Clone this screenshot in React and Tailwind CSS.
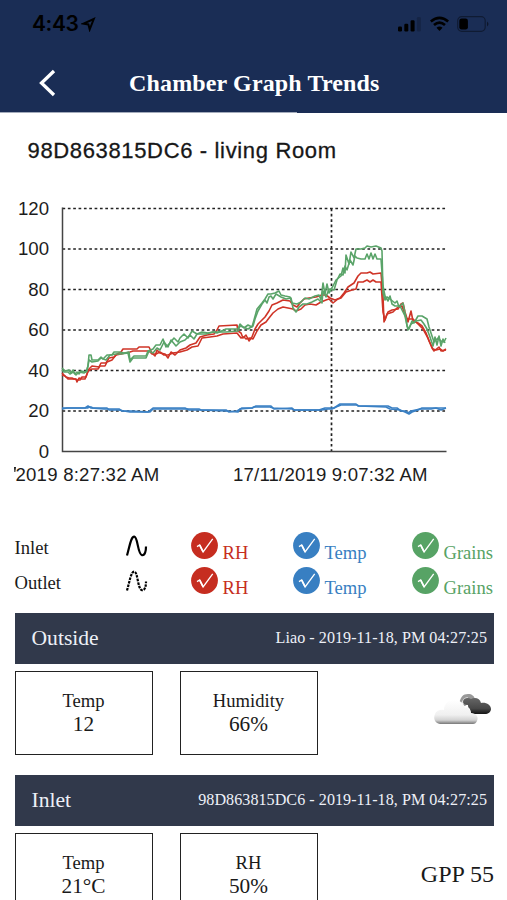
const SERIF = "font-['Liberation_Serif',serif]";

// pixel position of a value on the 0-120 scale
const yOf = (value) => 261.5 - value * 2.025;

const lines = [
  {
    color: '#3a80c4',
    points:
      '62,219 67,218 88,218 88,217 91,217 93,218 107,218 109,220 119,220 124,221 130,222 150,222 153,219 199,219 201,220 226,221 238,222 240,219 252,218 254,217 270,217 273,218 292,219 295,220 322,220 328,219 332,219 336,217 341,215 357,215 359,216 386,217 390,219 400,220 405,222 409,224 412,222 418,220 422,218 446,218',
  },
  {
    color: '#3a80c4',
    points:
      '62,218 85,218 88,216 91,218 104,219 119,219 122,221 132,221 148,222 153,218 185,218 189,220 226,220 229,222 237,221 242,218 252,218 256,216 271,216 274,219 292,218 294,220 319,220 325,218 334,218 340,214 356,214 358,216 388,216 392,218 397,218 401,221 406,221 408,223 411,221 420,219 431,219 436,218 441,220 446,218',
  },
  {
    color: '#cf3427',
    points:
      '62,183 66,187 69,188 72,188 74,189 76,189 77,192 79,188 82,189 85,189 87,184 89,179 92,176 99,177 101,173 106,173 109,168 114,167 117,164 121,162 123,159 137,159 139,157 149,157 152,163 155,166 157,160 160,163 165,164 168,168 171,162 175,165 180,160 186,158 190,155 196,153 200,147 207,145 214,144 217,140 219,136 237,135 238,141 241,143 243,148 246,145 249,151 252,147 255,139 258,134 262,130 265,127 269,121 272,115 277,113 283,110 290,111 293,115 297,117 300,113 304,109 309,108 316,107 322,105 326,105 330,108 335,110 340,108 344,103 348,97 354,93 358,86 361,83 367,83 370,82 373,84 381,83 383,106 384,132 388,122 392,120 398,119 401,114 403,113 405,122 408,132 411,121 413,131 418,133 422,136 426,143 429,151 433,159 436,160 440,159 443,161 446,159',
  },
  {
    color: '#cf3427',
    points:
      '62,185 65,186 68,189 75,189 77,190 80,190 82,187 86,187 88,181 92,179 98,179 100,176 105,176 107,172 112,170 116,165 121,164 130,162 133,161 149,161 152,164 156,164 160,162 164,165 168,165 173,163 180,162 187,160 192,157 198,156 202,148 210,147 217,146 223,144 237,143 241,148 244,147 246,149 250,148 253,149 257,141 261,135 266,132 269,128 273,123 278,119 283,117 288,118 293,119 296,121 301,119 305,115 310,114 316,115 321,112 326,110 329,109 333,113 338,109 341,108 346,102 352,100 356,99 358,92 363,92 367,90 370,92 373,90 376,92 381,92 383,122 385,130 387,124 393,122 397,118 402,116 406,128 408,129 413,129 418,134 423,139 428,148 432,158 434,161 439,157 441,161 446,160',
  },
  {
    color: '#5aa469',
    points:
      '62,178 65,181 69,180 71,183 73,180 75,184 77,182 79,184 81,181 86,182 88,176 89,165 91,165 92,170 98,170 101,167 103,169 107,165 112,165 114,162 119,162 124,163 129,162 130,170 134,166 146,166 148,161 153,159 156,155 160,155 163,149 166,157 170,153 174,148 178,152 180,148 184,144 188,148 192,141 197,144 202,142 208,143 213,142 217,143 226,139 238,139 240,134 244,138 248,135 252,137 254,130 257,119 262,113 265,109 268,104 271,104 275,103 279,101 281,105 285,106 290,107 292,113 297,114 301,112 305,108 309,109 315,106 319,105 321,110 323,93 325,104 327,94 329,103 333,96 336,90 341,86 343,78 345,83 346,65 349,74 351,62 354,68 356,59 361,59 365,58 367,56 371,57 376,56 381,58 382,61 383,103 385,110 387,107 390,109 395,113 397,111 399,117 403,113 406,128 407,136 409,139 412,131 414,133 418,126 422,126 427,129 429,137 432,146 434,152 438,148 441,151 444,152 446,148',
  },
  {
    color: '#5aa469',
    points:
      '62,180 64,182 68,182 70,184 73,182 76,185 79,182 84,183 87,181 89,170 92,172 98,171 101,168 106,170 110,165 116,164 121,164 128,163 130,172 133,168 146,168 149,161 153,163 157,158 160,160 164,152 168,157 171,150 176,156 180,152 185,150 190,145 194,149 197,144 206,144 213,142 226,142 238,141 240,136 243,137 248,139 253,136 255,129 258,121 262,114 265,110 267,113 269,107 271,106 273,109 276,104 281,107 286,109 291,108 293,118 296,122 299,117 303,114 307,114 312,112 318,109 322,113 323,101 326,107 329,99 334,100 337,90 340,84 343,85 345,76 347,80 350,70 353,75 355,66 357,68 361,69 365,69 367,64 369,69 371,63 373,69 375,64 377,69 381,69 383,96 385,106 388,111 390,106 392,114 395,116 400,116 405,126 408,140 411,134 416,131 421,130 424,134 427,139 430,147 433,156 435,147 437,155 439,146 441,156 443,149 445,153',
  },
];

function StatusBar() {
  return (
    <div className="flex h-12 items-center justify-between pl-8 pr-[18px] text-black">
      <div className="flex items-center gap-[3px]">
        <span className="font-['Inter',sans-serif] text-[21px] font-semibold leading-6 tracking-[-0.4px]">4:43</span>
        <svg width="15" height="15" viewBox="0 0 15 15" fill="none" stroke="currentColor" strokeWidth="2">
          <path d="M2.5 6.6 12.8 2 8.7 12.4 7.4 7.4Z" strokeLinejoin="miter" />
        </svg>
      </div>
      <div className="flex items-center gap-2">
        <svg width="24" height="16" viewBox="0 0 24 16" fill="currentColor">
          <rect x="0" y="10.5" width="4" height="5" rx="1.2" />
          <rect x="6.3" y="7.8" width="4" height="7.7" rx="1.2" />
          <rect x="12.6" y="4.3" width="4" height="11.2" rx="1.2" />
          <rect x="18.9" y="1" width="4" height="14.5" rx="1.2" opacity="0.18" />
        </svg>
        <svg width="19" height="16" viewBox="0 0 19 16" fill="none" stroke="currentColor" strokeWidth="2.7">
          <path d="M.8 5.5Q9.5-1.7 18.2 5.5" />
          <path d="M4 9Q9.5 4.3 15 9" />
          <path d="M6.5 11.8Q9.5 9.3 12.5 11.8L9.5 15Z" fill="currentColor" stroke="none" />
        </svg>
        <svg width="32" height="16" viewBox="0 0 32 16">
          <rect x=".7" y=".7" width="27.5" height="14.6" rx="4" fill="none" stroke="#000" strokeOpacity=".4" strokeWidth="1.2" />
          <rect x="2.3" y="2.5" width="8.6" height="11" rx="2.3" />
          <path d="M30 5.5q3 2.5 0 5Z" opacity=".5" />
        </svg>
      </div>
    </div>
  );
}

function Header() {
  return (
    <header className="h-[113px] bg-[#1a2d55]">
      <StatusBar />
      <div className="grid h-16 grid-cols-[129px_1fr] items-center">
        <svg className="ml-[37px] mt-[5px]" width="20" height="28" viewBox="0 0 20 28" fill="none" stroke="white" strokeWidth="3.3">
          <path d="M17 2 4.500 14l12.500 12" />
        </svg>
        <h1 className={`${SERIF} mt-[6px] whitespace-nowrap text-[24px] font-bold leading-7 tracking-[0.15px] text-white`}>
          Chamber Graph Trends
        </h1>
      </div>
      <div className="h-px w-[297px] bg-[#a3abbb]" />
    </header>
  );
}

function Chart() {
  return (
    <svg className="block" width="507" height="310" viewBox="0 0 507 310">
      <g stroke="#222" strokeWidth="1.4" strokeDasharray="2.7 2.65">
        {[20, 40, 60, 80, 100, 120].map((value) => (
          <path key={value} d={`M62.5 ${yOf(value)}H446.5`} />
        ))}
        <path d="M331.5 18.5V261.5" strokeWidth="1.7" />
      </g>
      <path d="M62.5 17.5V261.5H446.5" fill="none" stroke="#444" strokeWidth="1.5" />
      <g fill="none" strokeWidth="1.6" strokeLinejoin="round">
        {lines.map((line, i) => (
          <polyline key={i} points={line.points} stroke={line.color} />
        ))}
      </g>
      <g className="font-['Liberation_Sans',sans-serif] text-[18.6px]" fill="#1c1c1c">
        {[0, 20, 40, 60, 80, 100, 120].map((value) => (
          <text key={value} x="49" y={yOf(value) + 6} textAnchor="end">
            {value}
          </text>
        ))}
        <text className="tracking-[0.22px]" x="15.5" y="290.5">
          2019 8:27:32 AM
        </text>
        <path d="M14 277h2l-.7 5h-.9Z" />
        <text className="tracking-[0.18px]" x="233" y="290.5">
          17/11/2019 9:07:32 AM
        </text>
      </g>
    </svg>
  );
}

function Check({ label, color }) {
  return (
    <div className={`flex h-[35px] items-start gap-[5px] ${color}`}>
      <svg width="27" height="27" viewBox="0 0 27 27">
        <circle cx="13.5" cy="13.5" r="13.4" fill="currentColor" />
        <path d="m6 14.600 2.700-1.700 3.400 7L21.700 6.800" fill="none" stroke="white" strokeWidth="1.3" />
        <path d="m8.700 13.200 3.300 6.400" fill="none" stroke="white" strokeWidth="1.7" />
      </svg>
      <span className="mt-[10px] text-[18.6px] leading-[22px]">{label}</span>
    </div>
  );
}

function LegendRow({ name, dashed }) {
  return (
    <div className="grid grid-cols-[110px_66px_102px_119px_auto]">
      <span className="mt-[5px] text-[18.6px] leading-[22px] text-[#1a1a1a]">{name}</span>
      <svg className="mt-[2px]" width="24" height="24" viewBox="0 0 24 24" fill="none" stroke="black" strokeWidth="2.2">
        <path
          d="M2 21.500C4.500 13 6 2.300 9.300 2.700C13 3.100 12.500 20 17 21.200C20 21.700 21 17 21 12.500"
          strokeDasharray={dashed ? '2.6 1' : undefined}
        />
      </svg>
      <Check label="RH" color="text-[#c62d20]" />
      <Check label="Temp" color="text-[#387fc2]" />
      <Check label="Grains" color="text-[#57a365]" />
    </div>
  );
}

function SectionBar({ title, detail }) {
  return (
    <div className="flex h-[51px] items-center justify-between bg-[#31394b] pl-[17px] pr-[7px] text-[#edf0f7]">
      <h2 className="text-[21.6px]">{title}</h2>
      <span className="text-[16.1px] tracking-[0.05px]">{detail}</span>
    </div>
  );
}

function Reading({ label, value }) {
  return (
    <div className="h-[84px] w-[138px] shrink-0 border border-[#222] pt-[17px] text-center text-[#1a1a1a]">
      <div className="text-[18.6px] leading-[23px]">{label}</div>
      <div className="text-[21.3px] leading-6">{value}</div>
    </div>
  );
}

function CloudIcon() {
  return (
    <svg width="60" height="34" viewBox="0 0 60 34">
      <defs>
        <linearGradient id="front" x1="0" y1="0" x2="0" y2="1">
          <stop offset="0" stopColor="#fff" />
          <stop offset=".62" stopColor="#f0f0f0" />
          <stop offset=".84" stopColor="#d2d2d2" />
          <stop offset="1" stopColor="#777" />
        </linearGradient>
        <linearGradient id="back" x1="0" y1="0" x2="0" y2="1">
          <stop offset="0" stopColor="#666" />
          <stop offset=".65" stopColor="#484848" />
          <stop offset="1" stopColor="#151515" />
        </linearGradient>
      </defs>
      <path d="M27 12C28 4 31 1 36 1c4 0 6 2 7 5l-10 7Z" fill="#999" />
      <path d="M29 11q2-7 7-7l-2 7Z" fill="#ddd" />
      <path d="M31 9c0-4 5-5 8-3 4-2 9-1 10 4 5-1 10 2 10 6 0 3-3 5-6 5H42c-3 0-4-2-4-5-2-1-2-3-2-4-3 0-5-1-5-3Z" fill="url(#back)" />
      <path d="M8 31c-5-1-7-5-5-10 1-3 5-5 9-4 0-6 4-10 10-10 6 0 10 3 11 8 4-1 6 2 6 5 5 0 8 4 6 8-1 2-2 3-4 3Z" fill="url(#front)" />
    </svg>
  );
}

function App() {
  return (
    <div className="h-[900px] w-[507px] overflow-hidden bg-white">
      <Header />
      <h2 className="h-[77px] whitespace-nowrap pl-[27.5px] pt-[25px] font-['Liberation_Sans',sans-serif] text-[22px] leading-[26px] tracking-[0.65px] text-[#171717] [-webkit-text-stroke:0.3px]">
        98D863815DC6 - living Room
      </h2>
      <Chart />
      <main className={`${SERIF} pl-[14.5px] pr-[13px] pt-8`}>
        <LegendRow name="Inlet" />
        <LegendRow name="Outlet" dashed />
        <section className="mt-[11px]">
          <SectionBar title="Outside" detail="Liao - 2019-11-18, PM 04:27:25" />
          <div className="mt-[7px] flex items-start">
            <Reading label="Temp" value="12" />
            <div className="ml-[27px]">
              <Reading label="Humidity" value="66%" />
            </div>
            <div className="ml-auto mr-[2px] mt-[22px]">
              <CloudIcon />
            </div>
          </div>
        </section>
        <section className="mt-5">
          <SectionBar title="Inlet" detail="98D863815DC6 - 2019-11-18, PM 04:27:25" />
          <div className="mt-[7px] flex items-start">
            <Reading label="Temp" value="21°C" />
            <div className="ml-[27px]">
              <Reading label="RH" value="50%" />
            </div>
            <div className="ml-auto mt-[27px] text-[24px] leading-7 text-[#1a1a1a]">GPP 55</div>
          </div>
        </section>
      </main>
    </div>
  );
}

export default App;
